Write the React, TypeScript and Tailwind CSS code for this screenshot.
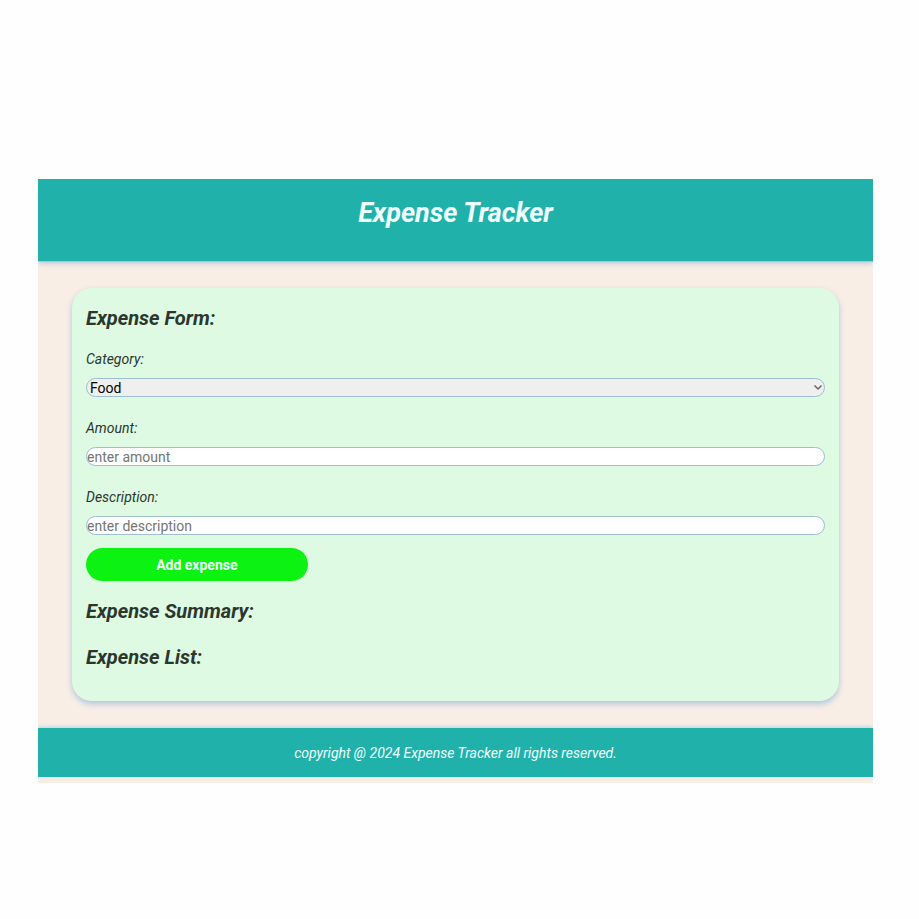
import type { ReactNode } from "react";

const fieldClass =
  "block h-[19px] w-full rounded-full border border-[#9dbfcf] p-0 text-sm leading-4 not-italic outline-none";

function Field({ id, label, children }: { id: string; label: string; children: ReactNode }) {
  return (
    <div className="flex flex-col gap-[9px]">
      <label htmlFor={id} className="text-sm leading-5">
        {label}
      </label>
      {children}
    </div>
  );
}

function SectionTitle({ children }: { children: ReactNode }) {
  return <h2 className="text-xl leading-7 font-bold">{children}</h2>;
}

export default function App() {
  return (
    <div className="min-h-screen bg-[#fefefe] pt-[179px] pr-[46px] pb-8 pl-[38px] font-['Roboto',sans-serif] text-[#2b362e] italic">
      <div className="overflow-hidden bg-[#f9eee5] pb-[6px]">
        <header className="bg-[#20b2aa] px-4 pt-4 pb-[30px] text-center shadow-[0_2px_6px_#b0c4de,0_1px_1px_#b0c4de]">
          <h1 className="text-[27px] leading-9 font-bold text-[#f0ffff]">Expense Tracker</h1>
        </header>

        <main className="mx-[34px] mt-[27px] mb-[27px] rounded-[20px] bg-[#defae2] px-[14px] pt-4 pb-[30px] shadow-[0_3px_6px_#b0c4de]">
          <SectionTitle>Expense Form:</SectionTitle>
          <form className="mt-[17px]" onSubmit={(event) => event.preventDefault()}>
            <div className="flex flex-col gap-[21px]">
              <Field id="category" label="Category:">
                <div className="relative">
                  <select
                    id="category"
                    defaultValue="food"
                    className={`${fieldClass} appearance-none bg-[#efefef] pl-[3px] text-black`}
                  >
                    <option value="food">Food</option>
                  </select>
                  <svg
                    viewBox="0 0 10 7"
                    aria-hidden="true"
                    className="pointer-events-none absolute top-[6px] right-[2px] h-[7px] w-[10px]"
                  >
                    <path d="M1.5 1.5 5 5 8.5 1.5" fill="none" stroke="#666" strokeWidth="1.5" />
                  </svg>
                </div>
              </Field>
              <Field id="amount" label="Amount:">
                <input
                  id="amount"
                  type="text"
                  inputMode="decimal"
                  placeholder="enter amount"
                  className={`${fieldClass} bg-white placeholder:text-[#757575]`}
                />
              </Field>
              <Field id="description" label="Description:">
                <input
                  id="description"
                  type="text"
                  placeholder="enter description"
                  className={`${fieldClass} bg-white placeholder:text-[#757575]`}
                />
              </Field>
            </div>
            <button
              type="submit"
              className="mt-[13px] block h-[33px] w-[30%] rounded-full bg-[#0cf211] text-sm font-bold text-[#f0ffff] not-italic"
            >
              Add expense
            </button>
          </form>
          <section className="mt-4 flex flex-col gap-[18px]">
            <SectionTitle>Expense Summary:</SectionTitle>
            <SectionTitle>Expense List:</SectionTitle>
          </section>
        </main>

        <footer className="bg-[#20b2aa] px-4 pt-[15px] pb-[14px] text-center shadow-[0_-1px_4px_#b0d4de]">
          <p className="text-sm leading-5 text-[#f0ffff]">
            copyright @ 2024 Expense Tracker all rights reserved.
          </p>
        </footer>
      </div>
    </div>
  );
}
